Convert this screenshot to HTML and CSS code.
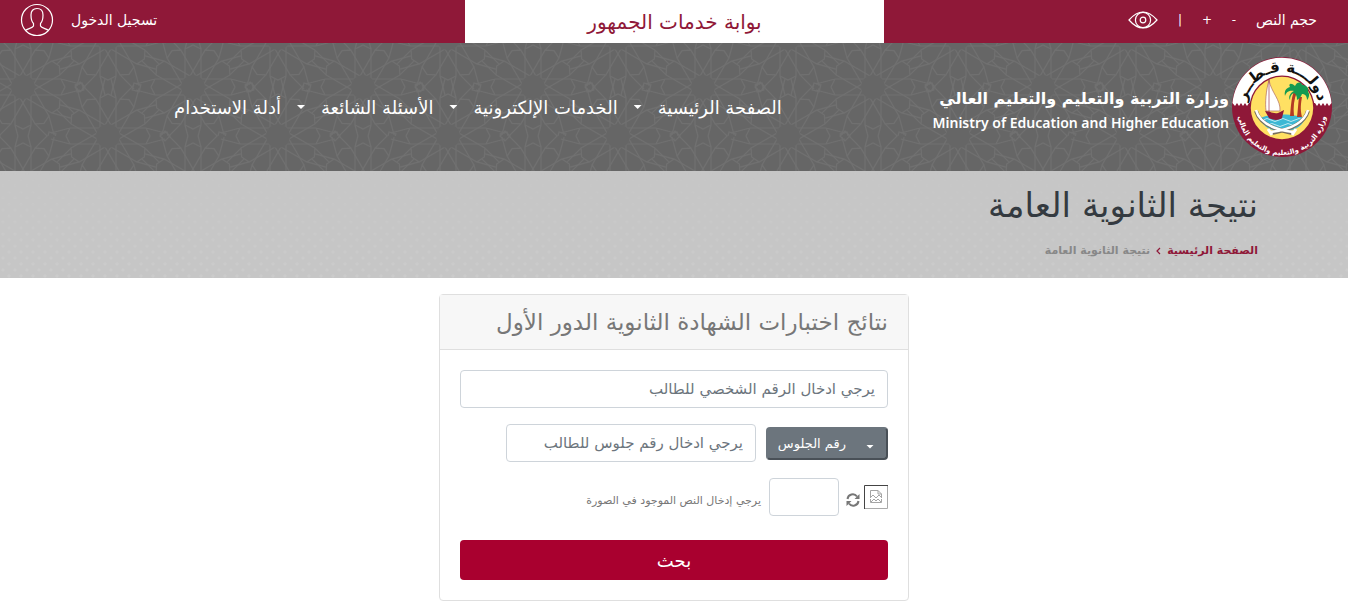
FILE: index.html
```html
<!DOCTYPE html>
<html lang="ar" dir="rtl">
<head>
<meta charset="utf-8">
<title>نتيجة الثانوية العامة</title>
<link rel="stylesheet" href="styles.css">
</head>
<body>
<div class="topbar">
  <div class="tools">
    <span class="tools-label">حجم النص</span>
    <button class="tool" type="button">-</button>
    <button class="tool" type="button">+</button>
    <span class="tool">|</span>
    <button class="tool eye" type="button" aria-label="التباين">
      <svg width="30" height="18" viewBox="0 0 30 18" fill="none" stroke="#fff" stroke-width="1.2"><path d="M1 9Q8 1 15 1T29 9Q22 17 15 17T1 9Z"/><circle cx="15" cy="9" r="7.6"/><circle cx="15" cy="9" r="2.8"/></svg>
    </button>
  </div>
  <div class="portal">بوابة خدمات الجمهور</div>
  <a class="login" href="#">
    <span>تسجيل الدخول</span>
    <svg width="34" height="34" viewBox="0 0 34 34" fill="none" stroke="#fff" stroke-width="1.2"><circle cx="17" cy="17" r="15.5"/><path d="M5.5 27.5C7 25.5 12.5 25.5 13.5 23V20.5C11.5 18.5 11 15.5 11 12C11 8 13 5.500 17 5.500S23 8 23 12C23 15.500 22.500 18.500 20.500 20.500V23C21.500 25.500 27 25.500 28.500 27.500"/></svg>
  </a>
</div>

<header class="header">
  <svg class="pattern" aria-hidden="true">
    <defs>
      <g id="petal"><path d="M8 -8H38L42 0L38 8H8M38 -8L57 -3M38 8L57 3"/></g>
      <g id="rosette">
        <use href="#petal"/><use href="#petal" transform="rotate(30)"/><use href="#petal" transform="rotate(60)"/><use href="#petal" transform="rotate(90)"/><use href="#petal" transform="rotate(120)"/><use href="#petal" transform="rotate(150)"/><use href="#petal" transform="rotate(180)"/><use href="#petal" transform="rotate(210)"/><use href="#petal" transform="rotate(240)"/><use href="#petal" transform="rotate(270)"/><use href="#petal" transform="rotate(300)"/><use href="#petal" transform="rotate(330)"/>
        <path d="M57 -5L62 0L57 5L52 0Z"/><path d="M57 -5L62 0L57 5L52 0Z" transform="rotate(60)"/><path d="M57 -5L62 0L57 5L52 0Z" transform="rotate(120)"/>
        <circle r="12" fill="#666" stroke="none"/>
      </g>
      <pattern id="girih" width="170" height="98" patternUnits="userSpaceOnUse" patternTransform="translate(23 -5)">
        <g fill="none" stroke="#707070" stroke-width="1.2">
          <use href="#rosette" x="85" y="0"/><use href="#rosette" x="85" y="98"/><use href="#rosette" x="0" y="49"/><use href="#rosette" x="170" y="49"/>
        </g>
      </pattern>
    </defs>
    <rect width="100%" height="100%" fill="url(#girih)"/>
  </svg>
  <a class="brand" href="#">
    <svg class="emblem" width="102" height="102" viewBox="0 0 102 102">
      <defs>
        <path id="arc-top" d="M15 46A36.500 36.500 0 0 1 87 46"/>
        <path id="arc-bottom" d="M7 55A44 44 0 0 0 95 55"/>
      </defs>
      <circle cx="51" cy="51" r="50" fill="#8f1838"/>
      <path d="M1.500 47A49.700 49.700 0 0 1 100.500 47L98 50L96 47L94 50L92 47L90 50L88 47L86 50L84 47H18L16 50L14 47L12 50L10 47L8 50L6 47L4 50Z" fill="#fff"/>
      <circle cx="51" cy="52" r="32.500" fill="#8f1838"/>
      <circle cx="51" cy="52" r="31.200" fill="#ffe063"/>
      <path d="M29 63C34 57 68 57 74 63C71 70 64 75 51 76C39 75 32 70 29 63Z" fill="#3cb8d4"/>
      <path d="M32 64Q36 61 40 64T48 64T56 64T64 64T72 64M37 69Q41 66 45 69T53 69T61 69T67 69" fill="none" stroke="#bdeaf2"/>
      <path d="M38 24C35 34 34 47 35 55H49C50 44 40 36 38 24Z" fill="#fff" stroke="#b97b69" stroke-width=".8"/>
      <path d="M38 23L38 57" stroke="#8f1838" stroke-width=".6"/>
      <path d="M34 55L38 62C43 65 49 64 51 62L53 54L47 57C42 58 38 55 34 55Z" fill="#8f1838"/>
      <path d="M63 35C60 43 60 51 59 60H63C62 51 63 43 66 36ZM68 41C67 49 67 54 66 61H71C69 53 70 47 71 41Z" fill="#b33a24"/>
      <path d="M63 35C57 34 55 37 54 40C53 35 55 32 59 31C57 28 60 26 64 30C66 25 71 26 71 29C75 29 78 31 77 36C79 38 78 42 76 44C76 40 74 38 71 38C70 41 68 43 66 44C66 40 65 38 63 37C60 38 59 41 59 44C57 41 59 37 63 35Z" fill="#159a51"/>
      <path d="M25 55C28 65 39 73 61 77M77 55C74 65 63 73 41 77" fill="none" stroke="#786e5d" stroke-width="4"/>
      <path d="M25 54C28 65 39 73 62 76M77 54C74 65 63 73 40 76" fill="none" stroke="#fff" stroke-width="2.600"/>
      <path d="M37 73L41 79M65 73L61 79" stroke="#fff" stroke-width="3"/>
      <text class="emblem-top" text-anchor="middle"><textPath href="#arc-top" startOffset="50%">دولـــة قـطــر</textPath></text>
      <text class="emblem-bottom" text-anchor="middle"><textPath href="#arc-bottom" startOffset="50%">وزارة التربية والتعليم والتعليم العالي</textPath></text>
    </svg>
    <span class="brand-text">
      <span class="brand-ar">وزارة التربية والتعليم والتعليم العالي</span>
      <span class="brand-en" dir="ltr">Ministry of Education and Higher Education</span>
    </span>
  </a>
  <nav class="nav">
    <a href="#">الصفحة الرئيسية</a><i class="caret"></i>
    <a href="#">الخدمات الإلكترونية</a><i class="caret"></i>
    <a href="#">الأسئلة الشائعة</a><i class="caret"></i>
    <a href="#">أدلة الاستخدام</a>
  </nav>
</header>

<section class="banner">
  <svg class="pattern" aria-hidden="true">
    <defs>
      <pattern id="dots" width="12" height="12" patternUnits="userSpaceOnUse"><path d="M3 1l2 2-2 2-2-2zM9 7l2 2-2 2-2-2z" fill="#cbcbcb"/></pattern>
      <linearGradient id="fade" x2="0" y2="1"><stop stop-color="#fff" stop-opacity=".1"/><stop offset="1" stop-color="#fff"/></linearGradient>
      <mask id="fade-mask"><rect width="100%" height="100%" fill="url(#fade)"/></mask>
    </defs>
    <rect width="100%" height="100%" fill="url(#dots)" mask="url(#fade-mask)"/>
  </svg>
  <h1 class="title">نتيجة الثانوية العامة</h1>
  <nav class="crumbs">
    <a href="#">الصفحة الرئيسية</a>
    <svg width="5" height="8" viewBox="0 0 5 8" fill="none" stroke="#8f1838" stroke-width="1.200"><path d="M4 1L1 4L4 7"/></svg>
    <span>نتيجة الثانوية العامة</span>
  </nav>
</section>

<main class="main">
  <form class="card">
    <h2 class="card-head">نتائج اختبارات الشهادة الثانوية الدور الأول</h2>
    <div class="card-body">
      <input class="field" type="text" aria-label="الرقم الشخصي" placeholder="يرجي ادخال الرقم الشخصي للطالب">
      <div class="row">
        <span class="picker">
          <select class="select" aria-label="نوع الرقم"><option>رقم الجلوس</option></select>
          <i class="caret picker-caret"></i>
        </span>
        <input class="field seat" type="text" aria-label="رقم الجلوس" placeholder="يرجي ادخال رقم جلوس للطالب">
      </div>
      <div class="row captcha">
        <svg class="broken" width="24" height="24" viewBox="0 0 24 24" fill="none"><path d="M.5 24V.5H24" stroke="#444"/><path d="M1 23.500H23.500V1" stroke="#aaa"/><g stroke="#a5a5a5"><path d="M6.500 12V5.500H14L17.500 9V12M14 5.500V9H17.500M6.500 14V17.500H17.500V14"/><path d="M6 13L9 10L12 13L15 10L18 13M7 17L10 14L12 16L14 14L17 17"/></g></svg>
        <button class="refresh" type="button" aria-label="تحديث">
          <svg width="14" height="14" viewBox="0 0 14 14"><path d="M1.500 6A5.300 5.300 0 0 1 11 3.500M12.500 8A5.300 5.300 0 0 1 3 10.500" fill="none" stroke="#777" stroke-width="2"/><path d="M13.500 1V6H8.500ZM.5 13V8H5.500Z" fill="#777"/></svg>
        </button>
        <input class="field code" id="code" type="text">
        <label class="code-label" for="code">يرجي إدخال النص الموجود في الصورة</label>
      </div>
      <button class="submit" type="submit">بحث</button>
    </div>
  </form>
</main>
</body>
</html>
```
FILE: styles.css
```css
* { box-sizing: border-box; }
body {
  margin: 0;
  background: #fff;
  font-family: "DejaVu Sans", sans-serif;
  font-size: 16px;
  color: #777;
}
a { color: inherit; text-decoration: none; }
button { font: inherit; color: inherit; background: none; border: 0; padding: 0; }

.topbar {
  display: grid;
  grid-template-columns: 464fr 419fr 465fr;
  height: 43px;
  background: #8f1838;
  color: #fff;
  font-size: 14px;
}
.tools { display: flex; align-items: center; padding: 0 31px 4px 0; gap: 18px; }
.tool { min-width: 8px; text-align: center; font-size: 12px; }
.eye { display: flex; }
.portal {
  display: flex;
  align-items: center;
  justify-content: center;
  background: #fff;
  color: #8f1838;
  font-size: 20px;
}
.login { display: flex; align-items: center; justify-content: flex-end; gap: 17px; padding: 0 0 4px 20px; }

.header {
  position: relative;
  display: grid;
  grid-template-columns: 42% 1fr;
  align-items: center;
  height: 128px;
  background: #666;
  color: #fff;
}
.pattern { position: absolute; inset: 0; width: 100%; height: 100%; }
.brand { position: relative; display: flex; align-items: center; gap: 2px; padding-right: 15px; }
.brand-text { display: flex; flex-direction: column; gap: 2px; padding-top: 5px; white-space: nowrap; }
.brand-ar { font-size: 16px; font-weight: 700; line-height: 24px; }
.brand-en { font-family: "Noto Sans", sans-serif; font-size: 14px; font-weight: 600; line-height: 20px; text-align: right; }
.emblem-top { font-size: 15px; font-weight: 700; fill: #111; }
.emblem-bottom { font-size: 7px; font-weight: 700; fill: #fff; }
.nav { position: relative; display: flex; align-items: center; font-size: 18px; white-space: nowrap; }
.caret { width: 8px; height: 4px; margin: 0 16px; background: currentColor; clip-path: polygon(0 0, 100% 0, 50% 100%); }

.banner { position: relative; min-height: 107px; padding: 8px 90px 0; background: #c6c6c6; }
.title { position: relative; margin: 0; font-size: 34px; font-weight: 400; line-height: 52px; color: #343a40; }
.crumbs { position: relative; display: flex; align-items: center; gap: 6px; margin-top: 10px; font-size: 11px; font-weight: 700; line-height: 20px; color: #888; }
.crumbs a { color: #8f1838; }

.main { display: flex; justify-content: center; padding: 16px 0 5px; }
.card { width: 100%; max-width: 470px; border: 1px solid #dfdfdf; border-radius: 4px; }
.card-head {
  margin: 0;
  padding: 0 20px;
  border-bottom: 1px solid #dfdfdf;
  background: #f7f7f7;
  font-size: 23px;
  font-weight: 400;
  line-height: 54px;
  white-space: nowrap;
}
.card-body { display: flex; flex-direction: column; gap: 16px; padding: 20px; }
.field {
  width: 100%;
  height: 38px;
  padding: 0 12px;
  border: 1px solid #ced4da;
  border-radius: 4px;
  font: inherit;
  font-size: 15px;
}
.field::placeholder { color: #6c757d; opacity: 1; }
.row { display: flex; align-items: center; gap: 10px; }
.picker { position: relative; color: #fff; }
.select {
  appearance: none;
  width: 122px;
  height: 33px;
  padding: 0 40px 0 8px;
  border: 2px solid;
  border-color: #6c757d #495057 #495057 #6c757d;
  border-radius: 4px;
  background: #6c757d;
  color: #fff;
  font: inherit;
  font-size: 13px;
}
.picker-caret { position: absolute; top: 18px; right: 14px; margin: 0; }
.seat { width: 250px; }
.captcha { gap: 8px; }
.broken { flex: none; }
.refresh { display: flex; margin-inline: -4px -1px; padding-top: 6px; }
.code { width: 70px; }
.code-label { font-size: 11px; padding-top: 6px; }
.submit { height: 40px; margin-top: 8px; border-radius: 4px; background: #a9002f; color: #fff; font-size: 18px; }
```
